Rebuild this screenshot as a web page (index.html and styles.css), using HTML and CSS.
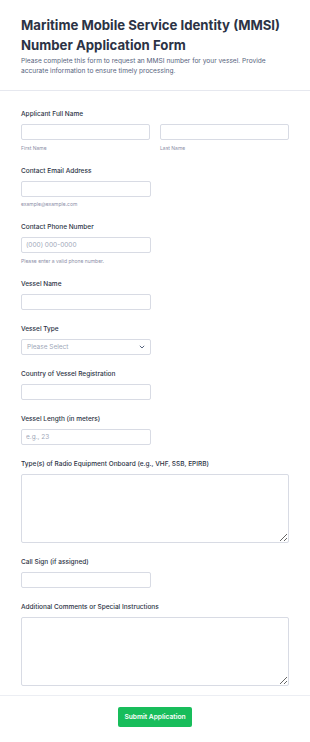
FILE: index.html
```html
<!DOCTYPE html>
<html lang="en">
  <head>
    <meta charset="UTF-8" />
    <meta name="viewport" content="width=device-width, initial-scale=1.0" />
    <title>MMSI Number Application Form</title>
    <link rel="stylesheet" href="styles.css">
  </head>
  <body>
    <form class="form">
      <div class="header">
        <h1>Maritime Mobile Service Identity (MMSI) Number Application Form</h1>
        <p class="subtitle">
          Please complete this form to request an MMSI number for your vessel. Provide
          accurate information to ensure timely processing.
        </p>
      </div>

      <div class="fields">
        <div class="field">
          <label class="label">Applicant Full Name</label>
          <div class="name-row">
            <div class="name-col">
              <input type="text" class="input" />
              <span class="sublabel">First Name</span>
            </div>
            <div class="name-col">
              <input type="text" class="input" />
              <span class="sublabel">Last Name</span>
            </div>
          </div>
        </div>

        <div class="field">
          <label class="label">Contact Email Address</label>
          <input type="email" class="input half" />
          <span class="sublabel">example@example.com</span>
        </div>

        <div class="field">
          <label class="label">Contact Phone Number</label>
          <input type="tel" class="input half" placeholder="(000) 000-0000" />
          <span class="sublabel">Please enter a valid phone number.</span>
        </div>

        <div class="field">
          <label class="label">Vessel Name</label>
          <input type="text" class="input half" />
        </div>

        <div class="field">
          <label class="label">Vessel Type</label>
          <div class="select half">
            <span>Please Select</span>
            <svg width="6" height="4" viewBox="0 0 6 4">
              <path d="M0.8 0.8 L3 3 L5.2 0.8" fill="none" stroke="#57647e" stroke-width="1" />
            </svg>
          </div>
        </div>

        <div class="field">
          <label class="label">Country of Vessel Registration</label>
          <input type="text" class="input half" />
        </div>

        <div class="field">
          <label class="label">Vessel Length (in meters)</label>
          <input type="text" class="input half" placeholder="e.g., 23" />
        </div>

        <div class="field">
          <label class="label">Type(s) of Radio Equipment Onboard (e.g., VHF, SSB, EPIRB)</label>
          <textarea class="textarea"></textarea>
        </div>

        <div class="field">
          <label class="label">Call Sign (if assigned)</label>
          <input type="text" class="input half" />
        </div>

        <div class="field last">
          <label class="label">Additional Comments or Special Instructions</label>
          <textarea class="textarea"></textarea>
        </div>
      </div>

      <div class="footer">
        <button type="button" class="submit">Submit Application</button>
      </div>
    </form>
  </body>
</html>
```

FILE: styles.css
```css
body {
  margin: 0;
  font-family: Inter, "Noto Sans", Arial, sans-serif;
  background-color: #ffffff;
  color: #2c3345;
}

.header {
  padding: 15px 21px 14px;
  border-bottom: 1px solid #e6e8ef;
}

h1 {
  margin: 0;
  font-size: 13.2px;
  line-height: 20px;
  font-weight: 700;
  color: #2c3345;
}

.subtitle {
  margin: 1px 0 0;
  font-size: 6.6px;
  line-height: 10px;
  color: #57647e;
}

.fields {
  padding: 18px 21px 0;
}

.field {
  display: flex;
  flex-direction: column;
  align-items: flex-start;
  margin-bottom: 14px;
}

.field.last {
  margin-bottom: 9px;
}

.label {
  font-size: 6.5px;
  line-height: 10px;
  font-weight: 500;
  color: #2c3345;
  margin-bottom: 5px;
}

.name-row {
  display: flex;
  gap: 10px;
  width: 100%;
}

.name-col {
  display: flex;
  flex-direction: column;
  flex: 1;
}

.input,
.select,
.textarea {
  box-sizing: border-box;
  border: 1px solid #d8dbe4;
  border-radius: 2px;
  background: #ffffff;
  font-family: inherit;
  font-size: 6.5px;
  color: #2c3345;
  margin: 0;
}

.input {
  height: 16px;
  padding: 0 4px;
  width: 100%;
}

.input.half {
  width: 130px;
}

.input::placeholder {
  color: #a0a7b8;
}

.select {
  height: 16px;
  width: 130px;
  padding: 0 5px;
  display: flex;
  align-items: center;
  justify-content: space-between;
  color: #a0a7b8;
}

.textarea {
  width: 100%;
  height: 69px;
  resize: vertical;
  padding: 4px 5px;
}

.sublabel {
  font-size: 5px;
  line-height: 7px;
  color: #8d8fa8;
  margin-top: 4.5px;
}

.footer {
  border-top: 1px solid #eceef3;
  padding: 11px 0 16px;
  display: flex;
  justify-content: center;
}

.submit {
  background-color: #18bd5b;
  border: none;
  border-radius: 2px;
  color: #ffffff;
  font-family: inherit;
  font-size: 6.7px;
  font-weight: 600;
  width: 74px;
  height: 20px;
  padding: 0;
  cursor: pointer;
}
```
